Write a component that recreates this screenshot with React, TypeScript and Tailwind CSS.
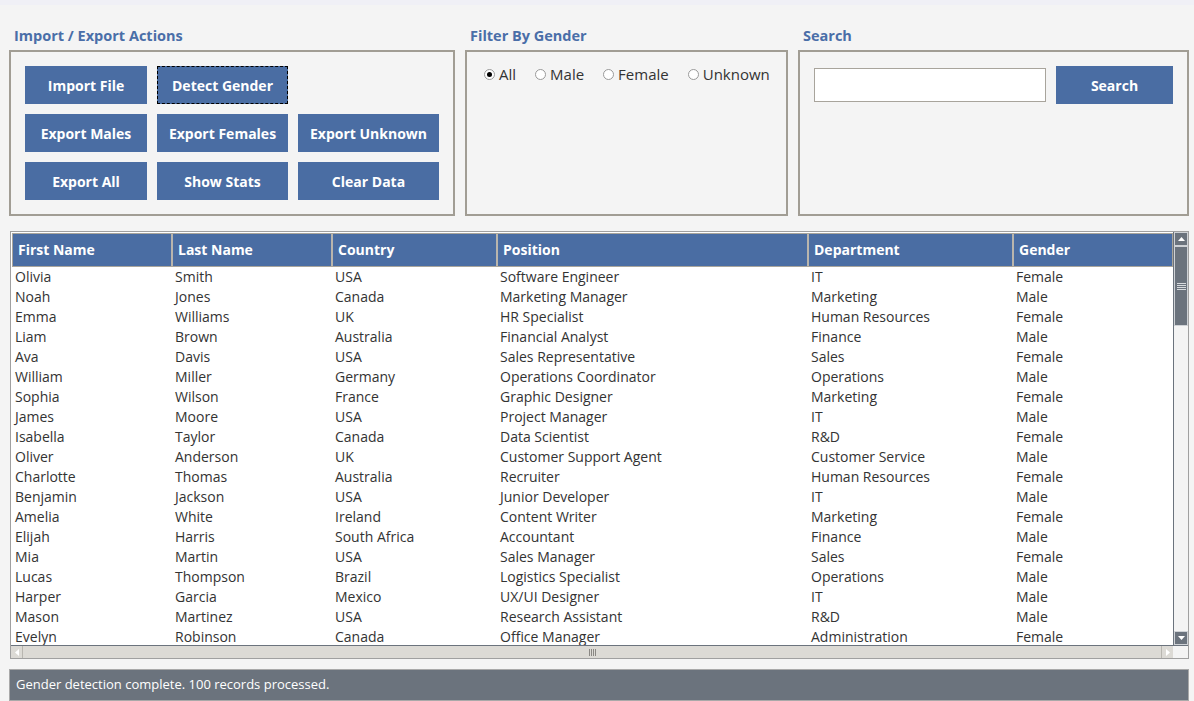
import React from 'react';

const rows: string[][] = [
  ['Olivia', 'Smith', 'USA', 'Software Engineer', 'IT', 'Female'],
  ['Noah', 'Jones', 'Canada', 'Marketing Manager', 'Marketing', 'Male'],
  ['Emma', 'Williams', 'UK', 'HR Specialist', 'Human Resources', 'Female'],
  ['Liam', 'Brown', 'Australia', 'Financial Analyst', 'Finance', 'Male'],
  ['Ava', 'Davis', 'USA', 'Sales Representative', 'Sales', 'Female'],
  ['William', 'Miller', 'Germany', 'Operations Coordinator', 'Operations', 'Male'],
  ['Sophia', 'Wilson', 'France', 'Graphic Designer', 'Marketing', 'Female'],
  ['James', 'Moore', 'USA', 'Project Manager', 'IT', 'Male'],
  ['Isabella', 'Taylor', 'Canada', 'Data Scientist', 'R&D', 'Female'],
  ['Oliver', 'Anderson', 'UK', 'Customer Support Agent', 'Customer Service', 'Male'],
  ['Charlotte', 'Thomas', 'Australia', 'Recruiter', 'Human Resources', 'Female'],
  ['Benjamin', 'Jackson', 'USA', 'Junior Developer', 'IT', 'Male'],
  ['Amelia', 'White', 'Ireland', 'Content Writer', 'Marketing', 'Female'],
  ['Elijah', 'Harris', 'South Africa', 'Accountant', 'Finance', 'Male'],
  ['Mia', 'Martin', 'USA', 'Sales Manager', 'Sales', 'Female'],
  ['Lucas', 'Thompson', 'Brazil', 'Logistics Specialist', 'Operations', 'Male'],
  ['Harper', 'Garcia', 'Mexico', 'UX/UI Designer', 'IT', 'Male'],
  ['Mason', 'Martinez', 'USA', 'Research Assistant', 'R&D', 'Male'],
  ['Evelyn', 'Robinson', 'Canada', 'Office Manager', 'Administration', 'Female'],
];

const columns = [
  { name: 'First Name', w: 'w-[160px]' },
  { name: 'Last Name', w: 'w-[160px]' },
  { name: 'Country', w: 'w-[165px]' },
  { name: 'Position', w: 'w-[311px]' },
  { name: 'Department', w: 'w-[205px]' },
  { name: 'Gender', w: 'w-[160px]' },
];

function ActionButton({ label, focused }: { label: string; focused?: boolean }) {
  return (
    <button
      className={
        'h-[38px] bg-[#4a6da3] text-white font-bold text-[14px] ' +
        (focused ? 'border border-dashed border-black' : '')
      }
    >
      {label}
    </button>
  );
}

function Radio({ label, checked }: { label: string; checked?: boolean }) {
  return (
    <label className="flex items-center gap-[4px]">
      <span className="w-[11px] h-[11px] rounded-full border border-[#9a9a9a] bg-white flex items-center justify-center">
        {checked && <span className="w-[5px] h-[5px] rounded-full bg-black" />}
      </span>
      <span>{label}</span>
    </label>
  );
}

function GroupTitle({ children }: { children: React.ReactNode }) {
  return (
    <div className="h-[45px] flex items-end pb-[3px] pl-[5px] text-[14.5px] font-bold text-[#4a6ea8]">
      {children}
    </div>
  );
}

export default function App() {
  return (
    <div
      className="w-[1194px] h-[701px] bg-[#f4f4f4] overflow-hidden text-[#333]"
      style={{ fontFamily: '"Open Sans", "Noto Sans", sans-serif' }}
    >
      <div className="h-[5px] bg-[#f0f0f6]" />

      {/* top panels */}
      <div className="flex gap-[10px] pl-[9px]">
        <div className="w-[446px]">
          <GroupTitle>Import / Export Actions</GroupTitle>
          <div className="h-[166px] border-2 border-[#a19d94] pt-[14px] pl-[14px]">
            <div className="grid grid-cols-[122px_131px_141px] gap-[10px]">
              <ActionButton label="Import File" />
              <ActionButton label="Detect Gender" focused />
              <div />
              <ActionButton label="Export Males" />
              <ActionButton label="Export Females" />
              <ActionButton label="Export Unknown" />
              <ActionButton label="Export All" />
              <ActionButton label="Show Stats" />
              <ActionButton label="Clear Data" />
            </div>
          </div>
        </div>

        <div className="w-[323px]">
          <GroupTitle>Filter By Gender</GroupTitle>
          <div className="h-[166px] border-2 border-[#a19d94] pt-[11px] pl-[17px] flex items-start gap-[19px] text-[15px]">
            <Radio label="All" checked />
            <Radio label="Male" />
            <Radio label="Female" />
            <Radio label="Unknown" />
          </div>
        </div>

        <div className="w-[391px]">
          <GroupTitle>Search</GroupTitle>
          <div className="h-[166px] border-2 border-[#a19d94] pt-[14px] pl-[14px] flex items-start gap-[10px]">
            <input className="mt-[2px] w-[232px] h-[34px] bg-white border border-[#a8a49c] outline-none" />
            <button className="w-[117px] h-[38px] bg-[#4a6da3] text-white font-bold text-[14px]">Search</button>
          </div>
        </div>
      </div>

      {/* grid */}
      <div className="ml-[10px] mt-[15px] w-[1179px] h-[428px] border border-[#a0a0a0] bg-white flex flex-col">
        <div className="flex h-[413px]">
          <div className="flex-1 flex flex-col pl-[1px] pt-[1px] overflow-hidden">
            <div className="flex h-[34px] shrink-0 bg-[#4a6da3] border border-[#a9a59c]">
              {columns.map((c) => (
                <div
                  key={c.name}
                  className={c.w + ' shrink-0 border-r-2 border-[#b9b5ad] flex items-center pl-[5px] pb-[1px] text-white font-bold text-[14px] last:border-r-0'}
                >
                  {c.name}
                </div>
              ))}
            </div>
            <div className="flex-1 overflow-hidden -mt-[1px]">
              {rows.map((r, i) => (
                <div key={i} className="flex h-[20px] items-center text-[14px]">
                  {r.map((cell, j) => (
                    <div key={j} className={columns[j].w + ' shrink-0 pl-[3px] whitespace-nowrap'}>
                      {cell}
                    </div>
                  ))}
                </div>
              ))}
            </div>
          </div>
          {/* vertical scrollbar */}
          <div className="w-[15px] bg-[#f4f4f4] border-l border-[#6b737d] flex flex-col">
            <div className="h-[14px] bg-[#6b737d] border border-[#cfd2d6] flex items-center justify-center">
              <svg width="7" height="4" viewBox="0 0 7 4"><path d="M0 4L3.5 0L7 4Z" fill="white" /></svg>
            </div>
            <div className="h-[80px] bg-[#6b737d] border border-[#cfd2d6] flex flex-col items-center justify-center gap-[1px]">
              <div className="w-[9px] h-[1px] bg-[#d8dbde]" />
              <div className="w-[9px] h-[1px] bg-[#d8dbde]" />
              <div className="w-[9px] h-[1px] bg-[#d8dbde]" />
              <div className="w-[9px] h-[1px] bg-[#d8dbde]" />
            </div>
            <div className="flex-1" />
            <div className="h-[14px] bg-[#6b737d] border border-[#cfd2d6] flex items-center justify-center">
              <svg width="7" height="4" viewBox="0 0 7 4"><path d="M0 0L3.5 4L7 0Z" fill="white" /></svg>
            </div>
          </div>
        </div>
        {/* horizontal scrollbar */}
        <div className="flex h-[13px] border-t border-[#6b737d]">
          <div className="flex-1 flex bg-[#dcdad5]">
            <div className="w-[12px] border-r border-[#b8b6b0] flex items-center justify-center">
              <svg width="4" height="7" viewBox="0 0 4 7"><path d="M4 0L0 3.5L4 7Z" fill="white" /></svg>
            </div>
            <div className="flex-1 flex items-center justify-center gap-[1px]">
              <div className="w-[1px] h-[7px] bg-[#8a8884]" />
              <div className="w-[1px] h-[7px] bg-[#8a8884]" />
              <div className="w-[1px] h-[7px] bg-[#8a8884]" />
              <div className="w-[1px] h-[7px] bg-[#8a8884]" />
            </div>
            <div className="w-[12px] border-l border-[#b8b6b0] flex items-center justify-center">
              <svg width="4" height="7" viewBox="0 0 4 7"><path d="M0 0L4 3.5L0 7Z" fill="white" /></svg>
            </div>
          </div>
          <div className="w-[15px] bg-[#f4f4f4]" />
        </div>
      </div>

      {/* status bar */}
      <div className="ml-[9px] mt-[10px] w-[1180px] h-[32px] border border-[#a9a9a9] bg-[#6b737d] text-white text-[13px] flex items-center pl-[6px]">
        Gender detection complete. 100 records processed.
      </div>
    </div>
  );
}
